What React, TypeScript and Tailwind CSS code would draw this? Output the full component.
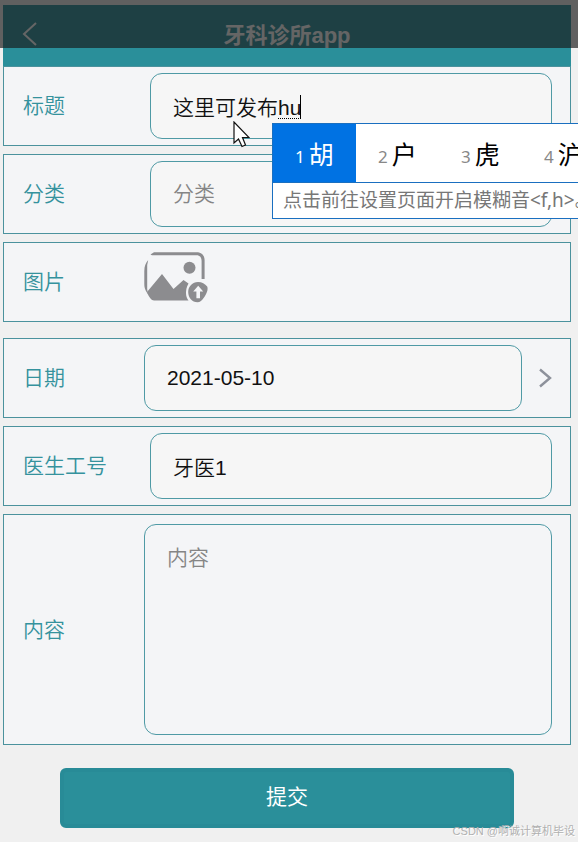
import { useState } from 'react'
import type { ReactNode } from 'react'

const candidates = ['胡', '户', '虎', '沪']

const fieldClass =
  'block h-[66px] w-full min-w-0 rounded-xl border border-[#4f9aa5] bg-[#f6f6f6] px-[22px] text-[21px] font-[350] text-[#111] outline-none placeholder:text-[#858585]'

function Row({
  id,
  label,
  wide = false,
  children,
}: {
  id: string
  label: string
  wide?: boolean
  children: ReactNode
}) {
  return (
    <div className="flex min-h-20 items-center border border-[#4b929d] bg-[#f4f5f7] pr-[18px] pl-[19px]">
      <label
        htmlFor={id}
        className={`shrink-0 text-[21px] font-[350] text-[#35929d] ${wide ? 'w-[121px]' : 'w-[127px]'}`}
      >
        {label}
      </label>
      {children}
    </div>
  )
}

function ImePopup() {
  return (
    <div className="absolute top-[50px] left-[122px] z-10 w-[420px] border border-[#1a6fc0] bg-white font-['Noto_Sans','Noto_Sans_CJK_SC',sans-serif]">
      <ol className="flex h-[59px] border-b border-[#1a6fc0]">
        {candidates.map((word, i) => (
          <li
            key={word}
            className={`flex w-[83px] shrink-0 items-center gap-1 pt-1 pl-[22px] ${
              i === 0 ? 'bg-[#0072e3] text-white' : 'text-black'
            }`}
          >
            <span className={`pt-1 text-[17px] ${i === 0 ? 'text-white' : 'text-[#888]'}`}>{i + 1}</span>
            <span className="text-[25px]">{word}</span>
          </li>
        ))}
      </ol>
      <p className="h-[35px] pl-[10px] text-[19px] leading-[35px] whitespace-nowrap text-[#777]">
        点击前往设置页面开启模糊音&lt;f,h&gt;。
      </p>
    </div>
  )
}

function UploadIcon() {
  return (
    <svg viewBox="0 0 66 54" className="h-[54px] w-[66px]" fill="#8c8c8f" aria-hidden="true">
      <path d="M10 1.3H54C58 1.8 60.6 5 60.6 9V28H57.6V10C57.6 6.5 56 4.2 52.5 4.2H8L6.5 3.4Z" />
      <path d="M4.2 9C1.8 12 0.3 15 0.3 20V33C0.3 38 2 40 4 43.5L3.2 38V14Z" />
      <circle cx="45.5" cy="16.7" r="6" />
      <path d="M3 41L18 23L29.5 38L39.5 29L44.5 32.5C42.3 36 42 40 42 42C42 45 43 47.5 44.5 49.5H10C7.5 49.5 5 46.5 3 41Z" />
      <path d="M54 31C58 31 61 33 63.2 35.5C64.5 38.5 62.5 43 60 46.5C58 49.5 56 51.3 53.5 51.3C48 51.3 44.2 46.5 44.2 41C44.2 35.5 48.5 31 54 31Z" />
      <path d="M54.2 34.8L59.2 40.5H56V47.3H52.4V40.5H49.2Z" fill="#f4f5f7" />
    </svg>
  )
}

export default function App() {
  const [title, setTitle] = useState('这里可发布hu')
  const [date, setDate] = useState('2021-05-10')
  const [doctor, setDoctor] = useState('牙医1')

  return (
    <div className="relative min-h-screen overflow-hidden bg-[#f0f0f0] pt-[5px] pr-[7px] pb-[14px] pl-[3px] font-['Liberation_Sans','Noto_Sans_CJK_SC',sans-serif]">
      <header className="flex h-[61px] items-center bg-[#2a8f9a] px-[19px] text-white">
        <button type="button" aria-label="返回" className="w-[30px] pb-1">
          <svg viewBox="0 0 16 24" className="h-6 w-4" fill="none" stroke="currentColor" strokeWidth="2">
            <path d="M14 1L2 12L14 23" />
          </svg>
        </button>
        <h1 className="flex-1 pr-[30px] text-center text-[22px] font-bold">牙科诊所app</h1>
      </header>
      {/* dimmed status bar */}
      <div className="pointer-events-none absolute inset-x-0 top-0 h-12 bg-[rgba(25,25,25,0.67)]" />

      <form onSubmit={(e) => e.preventDefault()}>
        <div className="flex flex-col gap-2">
          <Row id="title" label="标题">
            <div className="relative flex-1">
              <input
                id="title"
                className={fieldClass}
                value={title}
                onChange={(e) => setTitle(e.target.value)}
              />
              {/* composing text mark and caret */}
              <span className="absolute top-[22px] left-[128px] h-6 w-[23px] border-r border-b border-black [border-bottom-style:dotted]" />
              <ImePopup />
              <svg
                viewBox="0 0 17 27"
                className="absolute top-12 left-[83px] z-20 h-[27px] w-[17px]"
                fill="#fff"
                stroke="#111"
                strokeWidth="1.2"
                aria-hidden="true"
              >
                <path d="M1 1V22L5.5 18L9 25.5L12.5 24L9.5 16.5H16Z" />
              </svg>
            </div>
          </Row>

          <Row id="category" label="分类">
            <input id="category" className={fieldClass} placeholder="分类" />
          </Row>

          <Row id="picture" label="图片" wide>
            <button id="picture" type="button" aria-label="上传图片" className="mb-2">
              <UploadIcon />
            </button>
          </Row>
        </div>

        <div className="mt-4 flex flex-col gap-2">
          <Row id="date" label="日期" wide>
            <input
              id="date"
              className={fieldClass}
              value={date}
              onChange={(e) => setDate(e.target.value)}
            />
            <svg
              viewBox="0 0 14 20"
              className="ml-4 h-5 w-[14px] shrink-0"
              fill="none"
              stroke="#8d919b"
              strokeWidth="2.4"
              aria-hidden="true"
            >
              <path d="M2 1.5L12 10L2 18.5" />
            </svg>
          </Row>

          <Row id="doctor" label="医生工号">
            <input
              id="doctor"
              className={fieldClass}
              value={doctor}
              onChange={(e) => setDoctor(e.target.value)}
            />
          </Row>

          <Row id="content" label="内容" wide>
            <textarea
              id="content"
              placeholder="内容"
              className="my-[9px] block h-[211px] w-full min-w-0 resize-none rounded-xl border border-[#4f9aa5] bg-[#f4f5f7] px-[22px] py-[18px] text-[21px] leading-[30px] font-[350] text-[#111] outline-none placeholder:text-[#858585]"
            />
          </Row>
        </div>

        <button
          type="submit"
          className="mx-auto mt-[23px] block h-[60px] w-4/5 rounded-md border-4 border-[#288b97] bg-[#2a8f9a] pb-0.5 text-[21px] text-white"
        >
          提交
        </button>
      </form>

      <p className="absolute right-[3px] bottom-[3px] text-[11px] text-[#b0b0b0] [text-shadow:1px_1px_0_#fff]">
        CSDN @啊诚计算机毕设
      </p>
    </div>
  )
}
